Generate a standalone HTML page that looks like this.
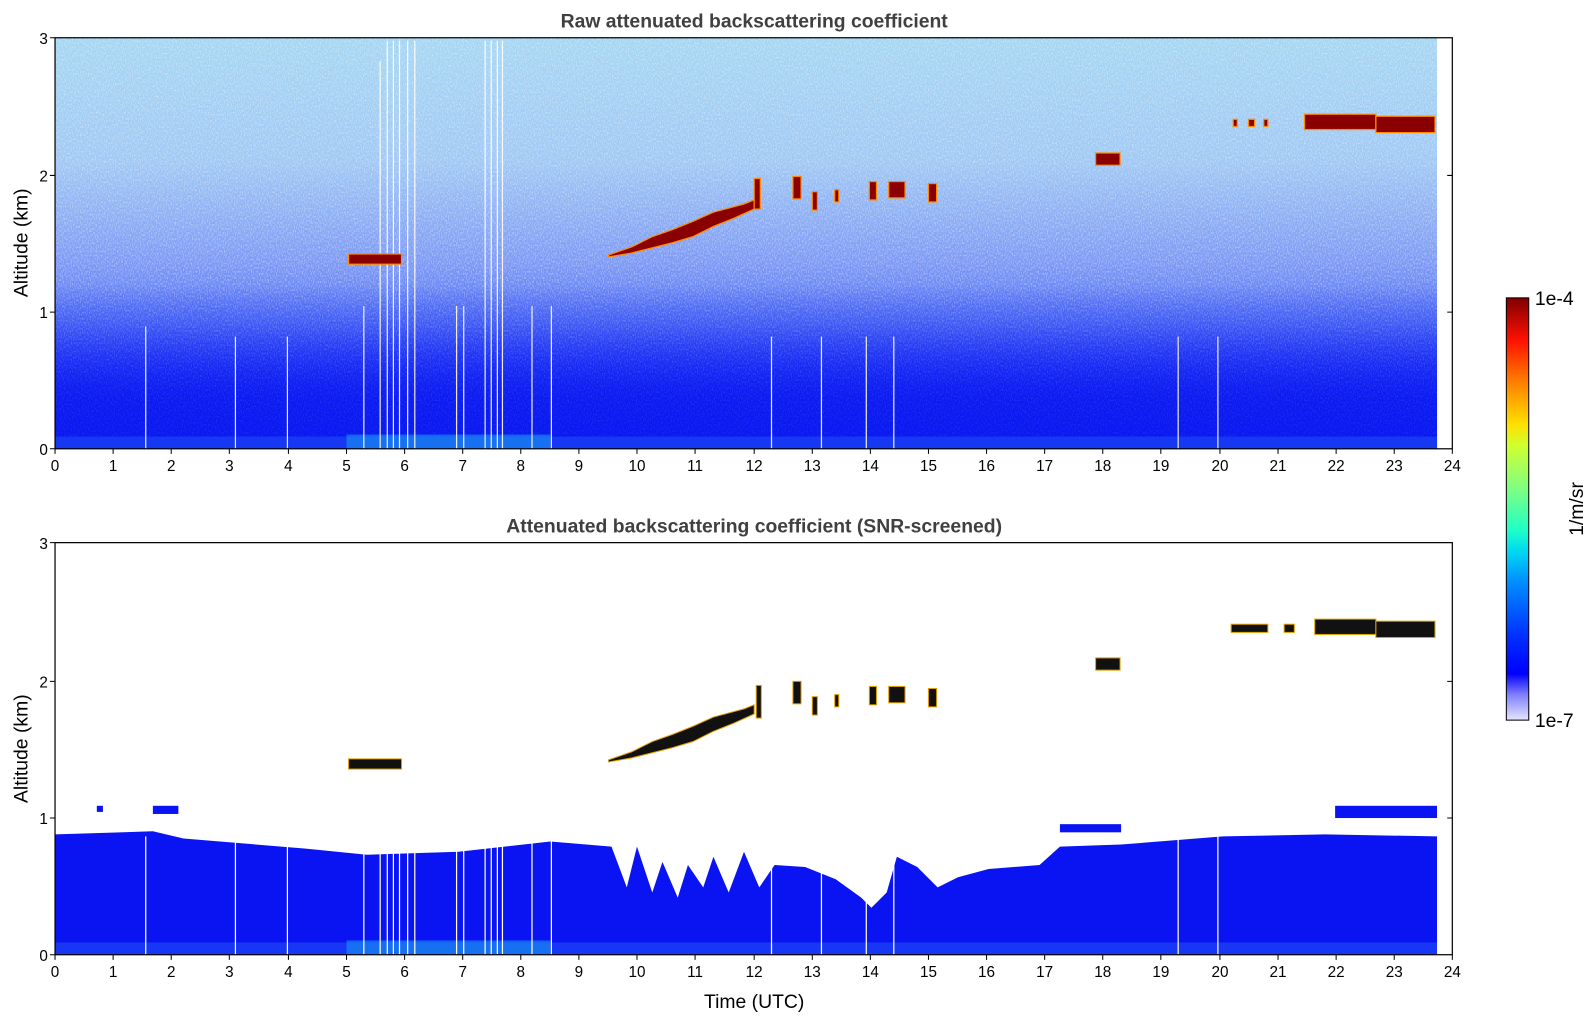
<!DOCTYPE html>
<html><head><meta charset="utf-8"><style>
html,body{margin:0;padding:0;background:#fff;}
svg{display:block;}
text{font-family:"Liberation Sans","DejaVu Sans",sans-serif;fill:#000;}
</style></head><body>
<svg width="1595" height="1020" viewBox="0 0 1565 1000" preserveAspectRatio="none" xmlns="http://www.w3.org/2000/svg">
<defs>
<linearGradient id="gt" x1="0" y1="0" x2="0" y2="1">
<stop offset="0" stop-color="#a6d6f2"/>
<stop offset="0.3" stop-color="#a0c8f4"/>
<stop offset="0.55" stop-color="#7c98f4"/>
<stop offset="0.7" stop-color="#5070f6"/>
<stop offset="0.8" stop-color="#2840f8"/>
<stop offset="0.88" stop-color="#1020f4"/>
<stop offset="1" stop-color="#0818f0"/>
</linearGradient>
<linearGradient id="ov" x1="0" y1="0" x2="0" y2="1">
<stop offset="0" stop-color="#0818f0" stop-opacity="0"/>
<stop offset="0.6" stop-color="#0818f0" stop-opacity="0"/>
<stop offset="0.85" stop-color="#0818f0" stop-opacity="0.7"/>
<stop offset="1" stop-color="#0818f0" stop-opacity="0.85"/>
</linearGradient>
<linearGradient id="cb" x1="0" y1="1" x2="0" y2="0">
<stop offset="0" stop-color="#e4e4ff"/>
<stop offset="0.06" stop-color="#8080ff"/>
<stop offset="0.11" stop-color="#0000ff"/>
<stop offset="0.2" stop-color="#0030ff"/>
<stop offset="0.33" stop-color="#0090ff"/>
<stop offset="0.4" stop-color="#00d8f0"/>
<stop offset="0.45" stop-color="#20ffc8"/>
<stop offset="0.55" stop-color="#80ff80"/>
<stop offset="0.65" stop-color="#d0ff30"/>
<stop offset="0.7" stop-color="#ffe000"/>
<stop offset="0.8" stop-color="#ff8000"/>
<stop offset="0.9" stop-color="#ff1000"/>
<stop offset="1" stop-color="#800000"/>
</linearGradient>
<filter id="nz" x="0" y="0" width="1" height="1">
<feTurbulence type="fractalNoise" baseFrequency="0.9 0.5" numOctaves="1" seed="3"/>
<feColorMatrix values="0 0 0 0 1  0 0 0 0 1  0 0 0 0 1  0 0 0 -2.2 1.25"/>
</filter>
</defs>

<!-- TOP PLOT -->
<text x="740" y="27" text-anchor="middle" font-size="19" font-weight="bold" style="fill:#404040">Raw attenuated backscattering coefficient</text>
<rect x="54" y="37" width="1356" height="403" fill="url(#gt)"/>
<rect x="54" y="37" width="1356" height="403" filter="url(#nz)" opacity="0.5"/>
<rect x="54" y="37" width="1356" height="403" fill="url(#ov)"/>
<rect x="54" y="428" width="1356" height="12" fill="#1a40f4" opacity="0.8"/>
<rect x="340" y="426" width="200" height="14" fill="#18a0f0" opacity="0.55"/>
<g stroke="#fff" stroke-width="1.2" opacity="0.9">
<line x1="143" y1="320" x2="143" y2="440"/><line x1="231" y1="330" x2="231" y2="440"/><line x1="282" y1="330" x2="282" y2="440"/>
<line x1="357" y1="300" x2="357" y2="440"/><line x1="373" y1="60" x2="373" y2="440"/><line x1="380" y1="40" x2="380" y2="440"/>
<line x1="386" y1="40" x2="386" y2="440"/><line x1="392" y1="40" x2="392" y2="440"/><line x1="400" y1="40" x2="400" y2="440"/>
<line x1="407" y1="40" x2="407" y2="440"/><line x1="448" y1="300" x2="448" y2="440"/><line x1="455" y1="300" x2="455" y2="440"/>
<line x1="476" y1="40" x2="476" y2="440"/><line x1="482" y1="40" x2="482" y2="440"/><line x1="488" y1="40" x2="488" y2="440"/><line x1="493" y1="40" x2="493" y2="440"/>
<line x1="522" y1="300" x2="522" y2="440"/><line x1="541" y1="300" x2="541" y2="440"/><line x1="757" y1="330" x2="757" y2="440"/>
<line x1="806" y1="330" x2="806" y2="440"/><line x1="850" y1="330" x2="850" y2="440"/><line x1="877" y1="330" x2="877" y2="440"/>
<line x1="1156" y1="330" x2="1156" y2="440"/><line x1="1195" y1="330" x2="1195" y2="440"/>
</g>
<g fill="#8a0000" stroke="#ff8a00" stroke-width="1.2">
<rect x="342" y="249" width="52" height="10"/>
<polygon points="597,250 620,242 640,232 660,225 680,217 700,208 730,200 740,196 740,205 720,214 700,222 680,232 660,238 640,243 620,248 597,252"/>
<rect x="740" y="175" width="6" height="30"/><rect x="778" y="173" width="8" height="22"/><rect x="797" y="188" width="5" height="18"/>
<rect x="819" y="186" width="4" height="12"/><rect x="853" y="178" width="7" height="18"/><rect x="872" y="178" width="16" height="16"/>
<rect x="911" y="180" width="8" height="18"/><rect x="1075" y="150" width="24" height="12"/>
<rect x="1210" y="117" width="4" height="7"/><rect x="1225" y="117" width="6" height="7"/><rect x="1240" y="117" width="4" height="7"/>
<rect x="1280" y="112" width="70" height="15"/><rect x="1350" y="114" width="58" height="16"/>
</g>
<rect x="54" y="37" width="1371" height="403" fill="none" stroke="#000" stroke-width="1.2"/>

<!-- BOTTOM PLOT -->
<text x="740" y="522" text-anchor="middle" font-size="19" font-weight="bold" style="fill:#404040">Attenuated backscattering coefficient (SNR-screened)</text>
<polygon fill="#0a14f2" points="54,818 150,815 180,822 300,832 360,838 450,835 540,825 600,830 615,870 625,830 640,875 650,845 665,880 675,848 690,870 700,840 715,875 730,835 745,870 760,848 790,850 820,862 845,880 855,890 870,875 880,840 900,850 920,870 940,860 970,852 1020,848 1040,830 1100,828 1200,820 1300,818 1410,820 1410,936 54,936"/>
<rect x="54" y="924" width="1356" height="12" fill="#1a40f4" opacity="0.8"/>
<rect x="340" y="922" width="200" height="14" fill="#18a0f0" opacity="0.55"/>
<g stroke="#fff" stroke-width="1.2">
<line x1="143" y1="820" x2="143" y2="936"/><line x1="231" y1="820" x2="231" y2="936"/><line x1="282" y1="820" x2="282" y2="936"/>
<line x1="357" y1="820" x2="357" y2="936"/><line x1="373" y1="820" x2="373" y2="936"/><line x1="380" y1="820" x2="380" y2="936"/>
<line x1="386" y1="820" x2="386" y2="936"/><line x1="392" y1="820" x2="392" y2="936"/><line x1="400" y1="820" x2="400" y2="936"/>
<line x1="407" y1="820" x2="407" y2="936"/><line x1="448" y1="820" x2="448" y2="936"/><line x1="455" y1="820" x2="455" y2="936"/>
<line x1="476" y1="820" x2="476" y2="936"/><line x1="482" y1="820" x2="482" y2="936"/><line x1="488" y1="820" x2="488" y2="936"/><line x1="493" y1="820" x2="493" y2="936"/>
<line x1="522" y1="820" x2="522" y2="936"/><line x1="541" y1="820" x2="541" y2="936"/><line x1="757" y1="840" x2="757" y2="936"/>
<line x1="806" y1="840" x2="806" y2="936"/><line x1="850" y1="880" x2="850" y2="936"/><line x1="877" y1="840" x2="877" y2="936"/>
<line x1="1156" y1="820" x2="1156" y2="936"/><line x1="1195" y1="820" x2="1195" y2="936"/>
</g>
<g fill="#0a14f2"><rect x="95" y="790" width="6" height="6"/><rect x="150" y="790" width="25" height="8"/><rect x="1310" y="790" width="100" height="12"/><rect x="1040" y="808" width="60" height="8"/></g>
<g fill="#111" stroke="#e0a000" stroke-width="1">
<rect x="342" y="744" width="52" height="10"/>
<polygon points="597,745 620,737 640,727 660,720 680,712 700,703 730,695 740,691 740,700 720,709 700,717 680,727 660,733 640,738 620,743 597,747"/>
<rect x="742" y="672" width="5" height="32"/><rect x="778" y="668" width="8" height="22"/><rect x="797" y="683" width="5" height="18"/>
<rect x="819" y="681" width="4" height="12"/><rect x="853" y="673" width="7" height="18"/><rect x="872" y="673" width="16" height="16"/>
<rect x="911" y="675" width="8" height="18"/><rect x="1075" y="645" width="24" height="12"/>
<rect x="1208" y="612" width="36" height="8"/><rect x="1260" y="612" width="10" height="8"/>
<rect x="1290" y="607" width="60" height="15"/><rect x="1350" y="609" width="58" height="16"/>
</g>
<rect x="54" y="532" width="1371" height="404" fill="none" stroke="#000" stroke-width="1.2"/>

<!-- axes ticks & labels -->
<g stroke="#000" stroke-width="1">
<path d="M54,440v5 M111,440v5 M168,440v5 M225,440v5 M283,440v5 M340,440v5 M397,440v5 M454,440v5 M511,440v5 M568,440v5 M625,440v5 M682,440v5 M740,440v5 M797,440v5 M854,440v5 M911,440v5 M968,440v5 M1025,440v5 M1082,440v5 M1139,440v5 M1197,440v5 M1254,440v5 M1311,440v5 M1368,440v5 M1425,440v5"/>
<path d="M54,936v5 M111,936v5 M168,936v5 M225,936v5 M283,936v5 M340,936v5 M397,936v5 M454,936v5 M511,936v5 M568,936v5 M625,936v5 M682,936v5 M740,936v5 M797,936v5 M854,936v5 M911,936v5 M968,936v5 M1025,936v5 M1082,936v5 M1139,936v5 M1197,936v5 M1254,936v5 M1311,936v5 M1368,936v5 M1425,936v5"/>
<path d="M49,440h5 M49,306h5 M49,172h5 M49,37h5 M1425,306h-5 M1425,172h-5 M49,936h5 M49,802h5 M49,668h5 M49,532h5 M1425,802h-5 M1425,668h-5"/>
</g>
<g font-size="15" text-anchor="middle">
<text x="54" y="462">0</text><text x="111" y="462">1</text><text x="168" y="462">2</text><text x="225" y="462">3</text><text x="283" y="462">4</text><text x="340" y="462">5</text><text x="397" y="462">6</text><text x="454" y="462">7</text><text x="511" y="462">8</text><text x="568" y="462">9</text><text x="625" y="462">10</text><text x="682" y="462">11</text><text x="740" y="462">12</text><text x="797" y="462">13</text><text x="854" y="462">14</text><text x="911" y="462">15</text><text x="968" y="462">16</text><text x="1025" y="462">17</text><text x="1082" y="462">18</text><text x="1139" y="462">19</text><text x="1197" y="462">20</text><text x="1254" y="462">21</text><text x="1311" y="462">22</text><text x="1368" y="462">23</text><text x="1425" y="462">24</text>
<text x="54" y="958">0</text><text x="111" y="958">1</text><text x="168" y="958">2</text><text x="225" y="958">3</text><text x="283" y="958">4</text><text x="340" y="958">5</text><text x="397" y="958">6</text><text x="454" y="958">7</text><text x="511" y="958">8</text><text x="568" y="958">9</text><text x="625" y="958">10</text><text x="682" y="958">11</text><text x="740" y="958">12</text><text x="797" y="958">13</text><text x="854" y="958">14</text><text x="911" y="958">15</text><text x="968" y="958">16</text><text x="1025" y="958">17</text><text x="1082" y="958">18</text><text x="1139" y="958">19</text><text x="1197" y="958">20</text><text x="1254" y="958">21</text><text x="1311" y="958">22</text><text x="1368" y="958">23</text><text x="1425" y="958">24</text>
</g>
<g font-size="15" text-anchor="end">
<text x="47" y="446">0</text><text x="47" y="312">1</text><text x="47" y="178">2</text><text x="47" y="43">3</text>
<text x="47" y="942">0</text><text x="47" y="808">1</text><text x="47" y="674">2</text><text x="47" y="538">3</text>
</g>
<text x="740" y="988" text-anchor="middle" font-size="19">Time (UTC)</text>
<text transform="translate(27,238) rotate(-90)" text-anchor="middle" font-size="19">Altitude (km)</text>
<text transform="translate(27,734) rotate(-90)" text-anchor="middle" font-size="19">Altitude (km)</text>

<!-- colorbar -->
<rect x="1478" y="292" width="22" height="414" fill="url(#cb)" stroke="#000" stroke-width="1"/>
<text x="1506" y="299" font-size="19">1e-4</text>
<text x="1506" y="713" font-size="19">1e-7</text>
<text transform="translate(1553,499) rotate(-90)" text-anchor="middle" font-size="19">1/m/sr</text>
</svg>
</body></html>
